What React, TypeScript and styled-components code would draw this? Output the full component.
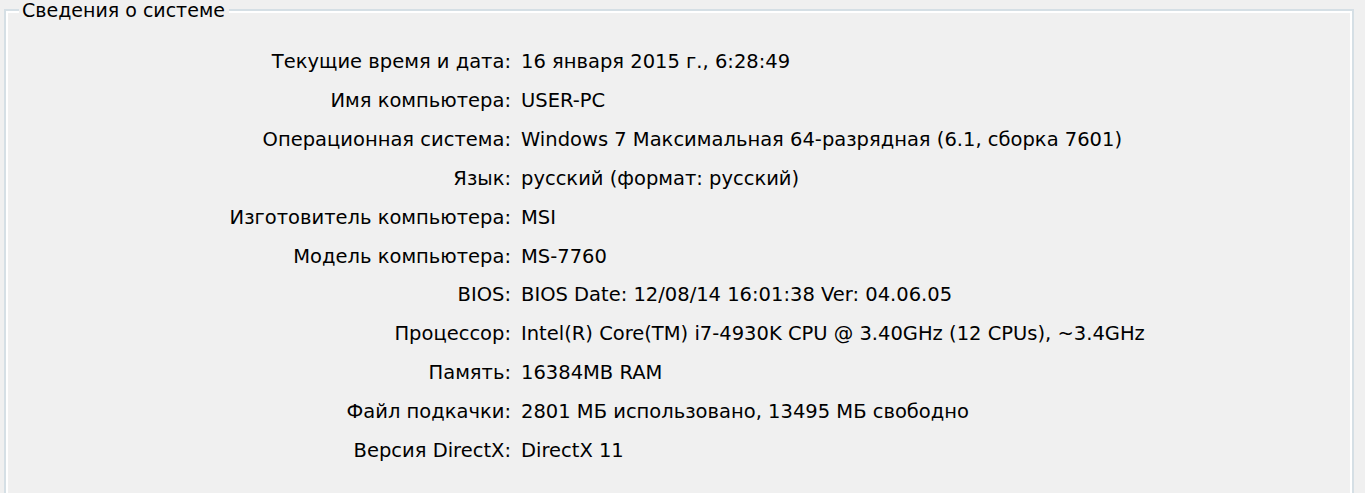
import React from "react";
import styled, { createGlobalStyle } from "styled-components";

const GlobalStyle = createGlobalStyle`
  html, body {
    margin: 0;
    padding: 0;
    background: #f0f0f0;
    overflow: hidden;
  }
  body {
    font-family: "DejaVu Sans", Verdana, sans-serif;
    color: #000;
  }
`;

const Page = styled.div`
  padding: 0 11px 0 4px;
`;

const GroupBox = styled.fieldset`
  margin: 0;
  padding: 0 0 0 13px;
  height: 540px;
  border: 2px solid #d5dfe5;
  box-shadow: inset 0 0 0 2px #ffffff;
  min-width: 0;
`;

const Legend = styled.legend`
  padding: 0 4px 0 3px;
  background: #f0f0f0;
  font-size: 19px;
  line-height: 20px;
  color: #000;
  position: relative;
`;

const InfoGrid = styled.div`
  display: grid;
  grid-template-columns: 492px auto;
  column-gap: 10px;
  margin-top: 23px;
  font-size: 19.5px;
  line-height: 38.9px;
`;

const Label = styled.div`
  text-align: right;
  white-space: nowrap;
`;

const Value = styled.div`
  white-space: nowrap;
`;

const rows: [string, string][] = [
  ["Текущие время и дата:", "16 января 2015 г., 6:28:49"],
  ["Имя компьютера:", "USER-PC"],
  ["Операционная система:", "Windows 7 Максимальная 64-разрядная (6.1, сборка 7601)"],
  ["Язык:", "русский (формат: русский)"],
  ["Изготовитель компьютера:", "MSI"],
  ["Модель компьютера:", "MS-7760"],
  ["BIOS:", "BIOS Date: 12/08/14 16:01:38 Ver: 04.06.05"],
  ["Процессор:", "Intel(R) Core(TM) i7-4930K CPU @ 3.40GHz (12 CPUs), ~3.4GHz"],
  ["Память:", "16384MB RAM"],
  ["Файл подкачки:", "2801 МБ использовано, 13495 МБ свободно"],
  ["Версия DirectX:", "DirectX 11"],
];

export default function App() {
  return (
    <>
      <GlobalStyle />
      <Page>
        <GroupBox>
          <Legend>Сведения о системе</Legend>
          <InfoGrid>
            {rows.map(([label, value]) => (
              <React.Fragment key={label}>
                <Label>{label}</Label>
                <Value>{value}</Value>
              </React.Fragment>
            ))}
          </InfoGrid>
        </GroupBox>
      </Page>
    </>
  );
}
